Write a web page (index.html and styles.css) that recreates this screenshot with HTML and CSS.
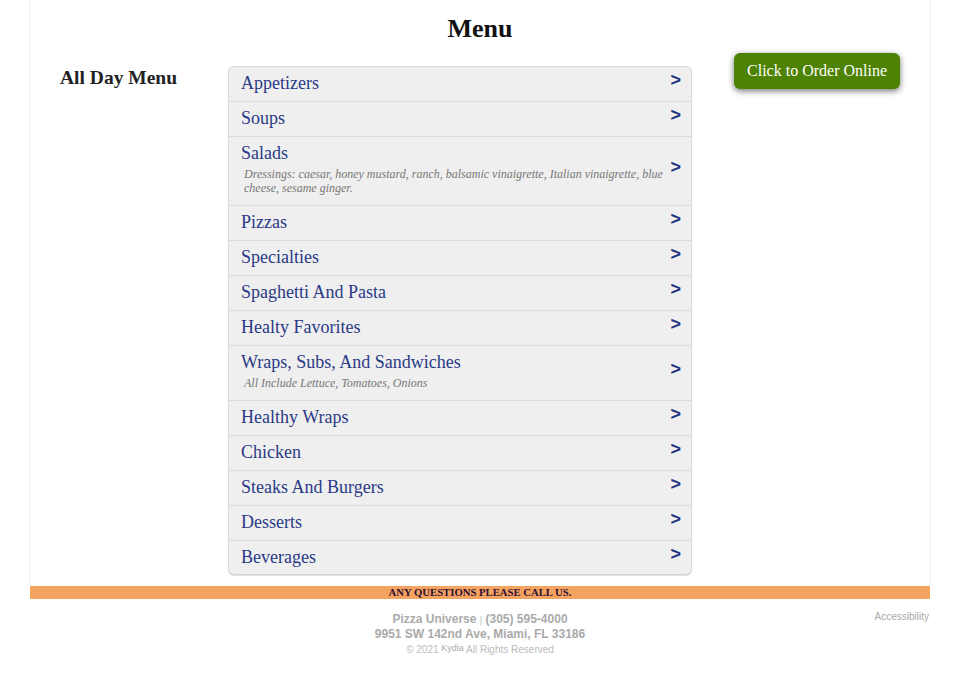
FILE: index.html
```html
<!DOCTYPE html>
<html>
<head>
<meta charset="utf-8">
<link rel="stylesheet" href="styles.css">
</head>
<body>
<div class="page">
  <div class="box">
    <h1 class="title">Menu</h1>
    <div class="main">
      <div class="side">
        <h2 class="side-title">All Day Menu</h2>
      </div>
      <div class="list">
        <div class="row"><div class="row-body"><div class="name">Appetizers</div></div><span class="chev">&gt;</span></div>
        <div class="row"><div class="row-body"><div class="name">Soups</div></div><span class="chev">&gt;</span></div>
        <div class="row"><div class="row-body"><div class="name">Salads</div><div class="desc">Dressings: caesar, honey mustard, ranch, balsamic vinaigrette, Italian vinaigrette, blue cheese, sesame ginger.</div></div><span class="chev">&gt;</span></div>
        <div class="row"><div class="row-body"><div class="name">Pizzas</div></div><span class="chev">&gt;</span></div>
        <div class="row"><div class="row-body"><div class="name">Specialties</div></div><span class="chev">&gt;</span></div>
        <div class="row"><div class="row-body"><div class="name">Spaghetti And Pasta</div></div><span class="chev">&gt;</span></div>
        <div class="row"><div class="row-body"><div class="name">Healty Favorites</div></div><span class="chev">&gt;</span></div>
        <div class="row"><div class="row-body"><div class="name">Wraps, Subs, And Sandwiches</div><div class="desc">All Include Lettuce, Tomatoes, Onions</div></div><span class="chev">&gt;</span></div>
        <div class="row"><div class="row-body"><div class="name">Healthy Wraps</div></div><span class="chev">&gt;</span></div>
        <div class="row"><div class="row-body"><div class="name">Chicken</div></div><span class="chev">&gt;</span></div>
        <div class="row"><div class="row-body"><div class="name">Steaks And Burgers</div></div><span class="chev">&gt;</span></div>
        <div class="row"><div class="row-body"><div class="name">Desserts</div></div><span class="chev">&gt;</span></div>
        <div class="row last"><div class="row-body"><div class="name">Beverages</div></div><span class="chev">&gt;</span></div>
      </div>
      <div class="order">
        <a class="order-btn" href="#">Click to Order Online</a>
      </div>
    </div>
  </div>
  <div class="bar">ANY QUESTIONS PLEASE CALL US.</div>
  <div class="footer">
    <div class="foot-spacer"></div>
    <div class="foot-center">
      <div class="foot-line"><span class="bold">Pizza Universe</span> <span class="sep">|</span> <span class="bold">(305) 595-4000</span></div>
      <div class="foot-line bold">9951 SW 142nd Ave, Miami, FL 33186</div>
      <div class="foot-copy">© 2021 <span class="kydia">Kydia</span> All Rights Reserved</div>
    </div>
    <div class="foot-right"><span class="access">Accessibility</span></div>
  </div>
</div>
</body>
</html>
```

FILE: styles.css
```css
html, body {
  margin: 0;
  padding: 0;
  background: #ffffff;
}
body {
  font-family: "Liberation Serif", "Times New Roman", serif;
}
.page {
  width: 900px;
  margin: 0 auto;
}
.box {
  margin: 0 -1px;
  border-left: 1px solid #eeeeee;
  border-right: 1px solid #eeeeee;
  padding-top: 14px;
  padding-bottom: 11px;
}
.title {
  margin: 0;
  text-align: center;
  font-size: 26px;
  line-height: 30px;
  font-weight: bold;
  color: #111111;
}
.main {
  display: flex;
  align-items: flex-start;
  margin-top: 9px;
}
.side {
  width: 168px;
  padding-left: 30px;
  margin-top: 13px;
}
.side-title {
  margin: 0;
  font-size: 19.5px;
  line-height: 23px;
  font-weight: bold;
  color: #222222;
}
.list {
  width: 462px;
  margin-top: 13px;
  border: 1px solid #dcdcdc;
  border-bottom-color: #d4d4d4;
  border-radius: 6px;
  background: #efefef;
  box-shadow: 0 1px 1px #dddddd;
  overflow: hidden;
}
.row {
  display: flex;
  align-items: center;
  border-bottom: 1px solid #dcdcdc;
  padding: 6px 10px 7px 12px;
}
.row.last {
  border-bottom: none;
  padding-bottom: 6px;
}
.row-body {
  flex: 1;
  min-width: 0;
}
.name {
  font-size: 18px;
  line-height: 21px;
  color: #2a3a86;
}
.desc {
  font-size: 12px;
  line-height: 14px;
  font-style: italic;
  color: #777777;
  padding: 3px 0 3px 3px;
}
.chev {
  font-family: "Liberation Sans", Arial, sans-serif;
  font-weight: bold;
  font-size: 18px;
  line-height: 21px;
  color: #24337f;
  margin-top: -6px;
  margin-left: 4px;
}
.order {
  flex: 1;
  display: flex;
  justify-content: flex-end;
  padding-right: 30px;
}
.order-btn {
  display: block;
  background: #4d8202;
  color: #ffffff;
  text-decoration: none;
  font-size: 16px;
  line-height: 20px;
  padding: 8px 13px 8px 13px;
  border-radius: 6px;
  box-shadow: 0 2px 6px rgba(0, 0, 0, 0.55);
}
.bar {
  background: #f4a460;
  text-align: center;
  font-size: 10.7px;
  line-height: 13px;
  font-weight: bold;
  color: #2e0f33;
}
.footer {
  display: grid;
  grid-template-columns: 1fr auto 1fr;
  padding-top: 13px;
  font-family: "Liberation Sans", Arial, sans-serif;
  color: #aaaaaa;
  text-align: center;
}
.foot-line {
  font-size: 12px;
  line-height: 14px;
}
.bold {
  font-weight: bold;
}
.sep {
  font-size: 9px;
  color: #bbbbbb;
}
.foot-copy {
  font-size: 10px;
  line-height: 14px;
  color: #bbbbbb;
}
.kydia {
  font-size: 9px;
  vertical-align: 2px;
  color: #aaaaaa;
}
.foot-right {
  text-align: right;
  padding-right: 1px;
}
.access {
  display: block;
  font-size: 10px;
  line-height: 14px;
  color: #aaaaaa;
  margin-top: -2px;
}
```
